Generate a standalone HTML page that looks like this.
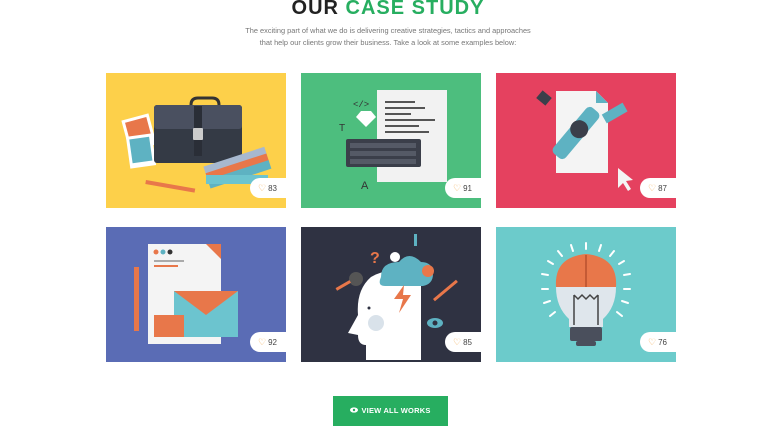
<!DOCTYPE html>
<html><head><meta charset="utf-8"><style>
*{margin:0;padding:0;box-sizing:border-box}
body{width:776px;height:432px;background:#fff;font-family:"Liberation Sans",sans-serif;position:relative;overflow:hidden}
h1{position:absolute;top:-3px;left:0;width:776px;text-align:center;font-size:20px;font-weight:900;color:#222;letter-spacing:1px}
h1 span{color:#27ae60}
p.sub{position:absolute;top:25px;left:0;width:776px;text-align:center;font-size:7.4px;line-height:12px;color:#777}
.card{position:absolute;width:180px;height:135px;overflow:hidden}
.card svg{position:absolute;left:0;top:0}
.b{position:absolute;right:0;top:105px;width:36px;height:20px;background:#fff;border-radius:10px 0 0 10px;font-size:8px;color:#444;line-height:20px;padding-left:8px}
.b i{font-style:normal;color:#f0a64a;font-size:9px;margin-right:2px}
.btn{position:absolute;left:333px;top:396px;width:115px;height:30px;background:#27ae60;color:#fff;font-size:7.5px;font-weight:bold;text-align:center;line-height:30px;letter-spacing:.2px}
.btn svg{vertical-align:middle;margin-right:3px;margin-top:-2px}
</style></head><body>
<h1>OUR <span>CASE STUDY</span></h1>
<p class="sub">The exciting part of what we do is delivering creative strategies, tactics and approaches<br>that help our clients grow their business. Take a look at some examples below:</p>

<div class="card" style="left:106px;top:73px;background:#fdd04a">
<svg width="180" height="135"><g transform="rotate(-15 40 70)"><rect x="22" y="42" width="28" height="32" fill="#fff"/><rect x="25" y="45" width="22" height="24" fill="#e8774a"/></g>
<rect x="22" y="62" width="26" height="32" fill="#fff" transform="rotate(-8 35 78)"/><rect x="25" y="65" width="20" height="24" fill="#5eb2c2" transform="rotate(-8 35 78)"/>
<path d="M85 32 q0-7 7-7 h14 q7 0 7 7" stroke="#333" stroke-width="3" fill="none"/>
<rect x="48" y="32" width="88" height="58" rx="3" fill="#343a45"/><rect x="48" y="32" width="88" height="24" rx="3" fill="#4a5060"/>
<rect x="88" y="33" width="8" height="50" fill="#2a2e37"/><rect x="87" y="55" width="10" height="12" rx="1" fill="#ccc"/>
<g transform="rotate(-18 110 100)"><rect x="100" y="90" width="64" height="9" fill="#a7b8cf"/><rect x="100" y="97" width="64" height="9" fill="#e8774a"/><rect x="100" y="104" width="64" height="9" fill="#5eb2c2"/></g>
<rect x="100" y="102" width="62" height="9" fill="#6cc4cf"/>
<rect x="40" y="107" width="50" height="4" fill="#e8774a" transform="rotate(10 40 107)"/></svg>
<div class="b"><i>♡</i>83</div></div>

<div class="card" style="left:301px;top:73px;background:#4dbe7e">
<svg width="180" height="135"><rect x="76" y="17" width="70" height="92" fill="#f2f2f2"/>
<g fill="#555"><rect x="84" y="28" width="30" height="2"/><rect x="84" y="34" width="40" height="2"/><rect x="84" y="40" width="26" height="2"/><rect x="84" y="46" width="50" height="2"/><rect x="84" y="52" width="34" height="2"/><rect x="84" y="58" width="44" height="2"/></g>
<rect x="45" y="66" width="75" height="28" rx="2" fill="#3b3f4a"/><g fill="#555a66"><rect x="49" y="70" width="66" height="5"/><rect x="49" y="78" width="66" height="5"/><rect x="49" y="86" width="66" height="5"/></g>
<path d="M55 44 l5-6 h10 l5 6 -10 10z" fill="#fff"/><text x="52" y="34" font-size="9" fill="#333" font-family="Liberation Mono">&lt;/&gt;</text>
<text x="38" y="58" font-size="10" fill="#333">T</text><text x="60" y="116" font-size="11" fill="#333">A</text></svg>
<div class="b"><i>♡</i>91</div></div>

<div class="card" style="left:496px;top:73px;background:#e5415f">
<svg width="180" height="135"><path d="M60 18 h40 l12 12 v70 h-52z" fill="#f4f4f4"/><path d="M100 18 v12 h12z" fill="#5eb2c2"/>
<g transform="rotate(40 80 60)"><rect x="72" y="30" width="16" height="60" rx="5" fill="#5eb2c2"/><circle cx="80" cy="55" r="9" fill="#3b3f4a"/></g>
<rect x="108" y="40" width="24" height="10" fill="#5eb2c2" transform="rotate(-30 110 45)"/>
<path d="M122 95 l0 20 5-5 5 8 3-2-5-8 7-1z" fill="#f4f4f4"/><rect x="42" y="20" width="12" height="10" fill="#3b3f4a" transform="rotate(40 48 25)"/></svg>
<div class="b"><i>♡</i>87</div></div>

<div class="card" style="left:106px;top:227px;background:#5a6cb5">
<svg width="180" height="135"><rect x="42" y="17" width="73" height="100" fill="#f4f4f4"/><path d="M100 17 h15 v15z" fill="#e8774a"/>
<circle cx="50" cy="25" r="2.5" fill="#e8774a"/><circle cx="57" cy="25" r="2.5" fill="#5eb2c2"/><circle cx="64" cy="25" r="2.5" fill="#333"/>
<rect x="48" y="33" width="30" height="2" fill="#aaa"/><rect x="48" y="38" width="24" height="2" fill="#e8774a"/>
<rect x="68" y="64" width="64" height="46" fill="#6cc4cf"/><path d="M68 64 l32 24 32-24z" fill="#e8774a"/>
<rect x="48" y="88" width="30" height="22" fill="#e8774a"/><rect x="28" y="40" width="5" height="64" fill="#e8774a"/></svg>
<div class="b"><i>♡</i>92</div></div>

<div class="card" style="left:301px;top:227px;background:#2f3242">
<svg width="180" height="135"><path d="M70 50 q20-12 50-3 v86 h-55 v-15 q-8 0-8-10 l-10-2 10-18 q-2-25 13-38z" fill="#fff"/>
<circle cx="75" cy="96" r="8" fill="#d9e2ea"/><circle cx="68" cy="81" r="1.5" fill="#2f3242"/>
<path d="M80 50 q0-15 18-15 q10-12 22 0 q12 0 12 12 q0 10-10 12 h-38 q-8 0-4-9z" fill="#5eb2c2"/>
<path d="M103 58 l-10 14 h9 l-4 14 12-18 h-8z" fill="#e8774a"/>
<circle cx="55" cy="52" r="7" fill="#555"/><rect x="34" y="57" width="16" height="3" fill="#e8774a" transform="rotate(-30 42 58)"/>
<text x="69" y="36" font-size="16" font-weight="bold" fill="#e8774a">?</text><circle cx="127" cy="44" r="6" fill="#e8774a"/>
<rect x="113" y="7" width="3" height="12" fill="#5eb2c2"/><rect x="132" y="72" width="30" height="3" fill="#e8774a" transform="rotate(-40 132 72)"/>
<ellipse cx="134" cy="96" rx="8" ry="5" fill="#5eb2c2"/><circle cx="134" cy="96" r="2.5" fill="#2f3242"/><circle cx="94" cy="30" r="5" fill="#fff"/></svg>
<div class="b"><i>♡</i>85</div></div>

<div class="card" style="left:496px;top:227px;background:#6ccbcb">
<svg width="180" height="135"><g stroke="#fff" stroke-width="2" stroke-linecap="round">
<line x1="90" y1="16" x2="90" y2="22"/><line x1="75" y1="18" x2="77" y2="24"/><line x1="105" y1="18" x2="103" y2="24"/><line x1="62" y1="24" x2="66" y2="29"/><line x1="118" y1="24" x2="114" y2="29"/><line x1="52" y1="34" x2="57" y2="37"/><line x1="128" y1="34" x2="123" y2="37"/><line x1="46" y1="47" x2="52" y2="48"/><line x1="134" y1="47" x2="128" y2="48"/><line x1="46" y1="62" x2="52" y2="62"/><line x1="134" y1="62" x2="128" y2="62"/><line x1="48" y1="76" x2="54" y2="74"/><line x1="132" y1="76" x2="126" y2="74"/><line x1="54" y1="89" x2="59" y2="85"/><line x1="126" y1="89" x2="121" y2="85"/></g>
<path d="M60 60 q-2-30 30-33 q32 3 30 33z" fill="#e8774a"/><rect x="89" y="28" width="2" height="32" fill="#c45a35"/>
<path d="M60 60 h60 q0 20-13 32 v8 h-34 v-8 q-13-12-13-32z" fill="#dfe6ec"/>
<path d="M78 68 v30 M102 68 v30 M78 68 l4 4 4-4 4 4 4-4 4 4 4-4" stroke="#444" stroke-width="1.5" fill="none"/>
<rect x="74" y="100" width="32" height="14" rx="2" fill="#4a4f5c"/><rect x="80" y="114" width="20" height="5" rx="2" fill="#4a4f5c"/></svg>
<div class="b"><i>♡</i>76</div></div>

<div class="btn"><svg width="8" height="6" viewBox="0 0 8 6"><ellipse cx="4" cy="3" rx="4" ry="2.6" fill="#fff"/><circle cx="4" cy="3" r="1.2" fill="#27ae60"/></svg>VIEW ALL WORKS</div>
</body></html>
